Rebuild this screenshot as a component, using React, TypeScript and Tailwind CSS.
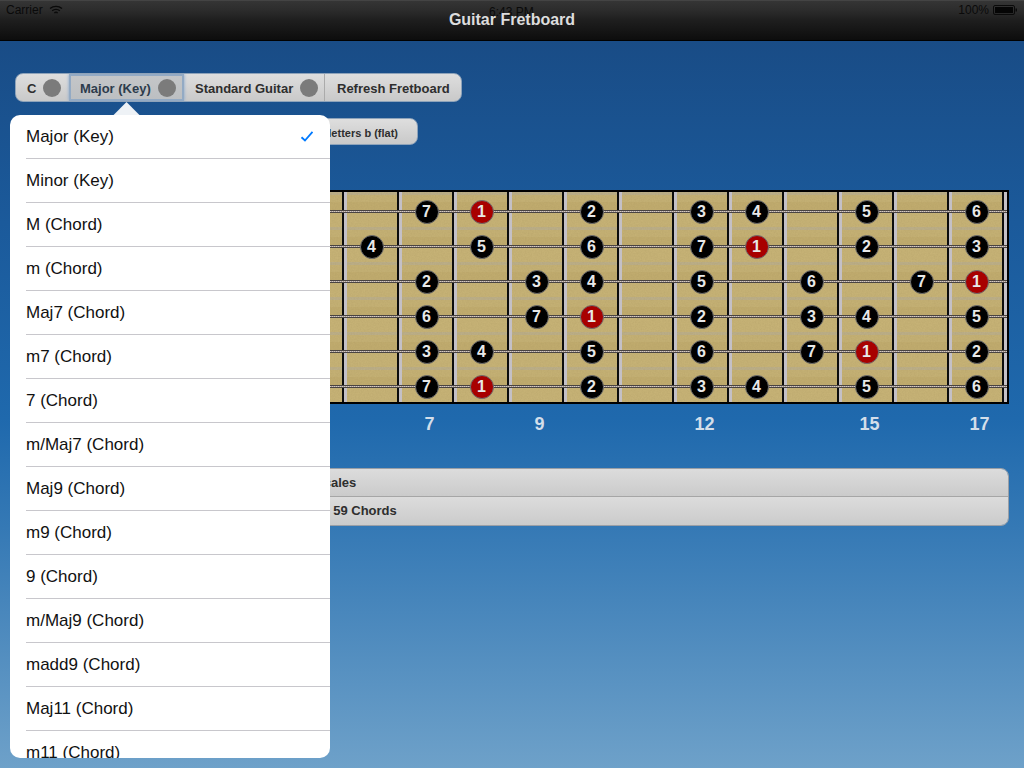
import React from 'react';

const KEY_OPTIONS = [
  'Major (Key)',
  'Minor (Key)',
  'M (Chord)',
  'm (Chord)',
  'Maj7 (Chord)',
  'm7 (Chord)',
  '7 (Chord)',
  'm/Maj7 (Chord)',
  'Maj9 (Chord)',
  'm9 (Chord)',
  '9 (Chord)',
  'm/Maj9 (Chord)',
  'madd9 (Chord)',
  'Maj11 (Chord)',
  'm11 (Chord)',
];

// fret -> scale degree, one map per string. Frets under the popover are left out.
const STRINGS: Record<number, number>[] = [
  { 7: 7, 8: 1, 10: 2, 12: 3, 13: 4, 15: 5, 17: 6 },
  { 6: 4, 8: 5, 10: 6, 12: 7, 13: 1, 15: 2, 17: 3 },
  { 7: 2, 9: 3, 10: 4, 12: 5, 14: 6, 16: 7, 17: 1 },
  { 7: 6, 9: 7, 10: 1, 12: 2, 14: 3, 15: 4, 17: 5 },
  { 7: 3, 8: 4, 10: 5, 12: 6, 14: 7, 15: 1, 17: 2 },
  { 7: 7, 8: 1, 10: 2, 12: 3, 13: 4, 15: 5, 17: 6 },
];

const FRETS = Array.from({ length: 18 }, (_, i) => i);
const FRET_MARKERS = [7, 9, 12, 15, 17];

function StatusBar() {
  return (
    <div className="absolute inset-x-0 top-0 flex h-5 items-center justify-between pl-[6px] pr-[6px] text-[12px] text-[#0a0a0a]">
      <div className="flex items-center gap-[6px]">
        <span>Carrier</span>
        <svg width="14" height="10" viewBox="0 0 14 10" fill="none" stroke="#0a0a0a" strokeWidth="1.3">
          <path d="M1 3.6C4.4 .6 9.6 .6 13 3.6" />
          <path d="M3.2 5.8C5.3 4 8.7 4 10.8 5.8" />
          <path d="M5.3 7.9C6.3 7.1 7.7 7.1 8.7 7.9" />
        </svg>
      </div>
      <span className="absolute left-[489px] top-[3px]">6:43 PM</span>
      <div className="flex items-center gap-[4px]">
        <span>100%</span>
        <svg width="25" height="10" viewBox="0 0 25 10">
          <rect x="0.5" y="0.5" width="21" height="9" rx="1.5" fill="none" stroke="#0a0a0a" />
          <rect x="2" y="2" width="18" height="6" fill="#050505" />
          <rect x="22.5" y="3.5" width="1.5" height="3" fill="#0a0a0a" />
        </svg>
      </div>
    </div>
  );
}

function Segment({
  label,
  hasDot,
  selected,
  className,
}: {
  label: string;
  hasDot?: boolean;
  selected?: boolean;
  className: string;
}) {
  return (
    <div
      className={`flex h-full items-center gap-[7px] pt-[1px] ${className} ${
        selected
          ? 'border-2 border-[#93aac4] bg-[linear-gradient(180deg,#c4c6c8,#bcbfc2)] text-[#2d3c4c] shadow-[0_0_3px_#7ea2cc]'
          : 'text-[#2e2e2e]'
      }`}
    >
      <span className="pt-[1px]">{label}</span>
      {hasDot && <span className="h-[18px] w-[18px] rounded-full bg-[#7b7b7b]" />}
    </div>
  );
}

function Note({ degree }: { degree: number }) {
  return (
    <div
      className={`relative flex h-[24px] w-[24px] items-center justify-center rounded-full border border-[#6f6f6f] text-[16px] font-bold text-[#e8e8e8] ${
        degree === 1 ? 'bg-[#a80000]' : 'bg-black'
      }`}
    >
      {degree}
    </div>
  );
}

function Fretboard() {
  return (
    <div className="relative h-[214px] w-[994px] overflow-hidden border-2 border-black bg-[repeating-linear-gradient(180deg,#bbae88_0_3px,#c4b074_3px_10px,#c0ab6e_10px_19px,#c6b276_19px_35px)]">
      {/* wood grain */}
      <svg className="absolute inset-0 h-full w-full opacity-25">
        <filter id="grain">
          <feTurbulence type="fractalNoise" baseFrequency="0.7 0.7" numOctaves="2" seed="4" />
          <feColorMatrix values="0 0 0 0 0.35  0 0 0 0 0.27  0 0 0 0 0.1  0 0 0 1.2 -0.3" />
        </filter>
        <rect width="100%" height="100%" filter="url(#grain)" />
      </svg>
      {/* frets */}
      <div className="absolute inset-0 bg-[repeating-linear-gradient(90deg,transparent_0_50px,#0c0c0c_50px_51.5px,#c4c0c6_51.5px_54.5px,transparent_54.5px_55px)]" />
      <div className="relative flex flex-col pt-[2px]">
        {STRINGS.map((notes, s) => (
          <div key={s} className="relative h-[35px]">
            <div className="absolute inset-x-0 top-[16px] h-[3px] border-y border-[#4a4442] bg-[repeating-linear-gradient(90deg,#a3958f_0_1px,#d4cbc6_1px_2px)]" />
            <div className="relative grid h-full grid-cols-[52px_repeat(17,55px)]">
              {FRETS.map((fret) => (
                <div key={fret} className="flex items-center justify-center">
                  {notes[fret] !== undefined && <Note degree={notes[fret]} />}
                </div>
              ))}
            </div>
          </div>
        ))}
      </div>
    </div>
  );
}

function KeyPopover() {
  return (
    <div className="absolute left-[10px] top-[115px] h-[643px] w-[320px]">
      <div className="absolute left-[107px] top-[-9px] h-[19px] w-[19px] rotate-45 bg-[#eef2f6]" />
      <div className="relative h-full overflow-hidden rounded-[10px] bg-white">
        {KEY_OPTIONS.map((option, i) => (
          <div key={option} className="h-[44px] pl-[16px]">
            <div className="flex h-full items-center justify-between border-b border-[#c8c7cc] pr-[16px] text-[17px] text-[#111111]">
              <span>{option}</span>
              {i === 0 && (
                <svg width="14" height="11" viewBox="0 0 14 12" fill="none" stroke="#007aff" strokeWidth="2">
                  <path d="M1 6.8L4.8 10.4L13 1" />
                </svg>
              )}
            </div>
          </div>
        ))}
      </div>
    </div>
  );
}

export default function App() {
  return (
    <div className="relative flex h-[768px] w-[1024px] flex-col overflow-hidden [font-family:'Liberation_Sans',Arial,sans-serif]">
      <header className="relative flex h-[41px] shrink-0 items-center justify-center bg-[linear-gradient(180deg,#363636,#2c2c2c_25%,#1e1e1e_50%,#0c0c0c)] pb-[2px] shadow-[inset_0_1px_0_#444,inset_0_-1px_0_#000]">
        <StatusBar />
        <h1 className="relative text-[16px] font-bold text-[#dddddd]">Guitar Fretboard</h1>
      </header>

      <main className="flex flex-1 flex-col items-start bg-[linear-gradient(180deg,#194c86,#1b5a9b_25%,#1f69ad_52%,#3579b5_67%,#6ea1c9)] pl-[15px] pt-[32px]">
        <div className="flex h-[29px] w-[447px] overflow-hidden rounded-[8px] border border-[#8ea3ba] bg-[linear-gradient(180deg,#dedede,#c9c9c9)] text-[13px] font-bold">
          <Segment label="C" hasDot className="w-[53px] pl-[11px]" />
          <Segment label="Major (Key)" hasDot selected className="w-[115px] pl-[9px]" />
          <Segment label="Standard Guitar" hasDot className="w-[141px] border-r border-[#ababab] pl-[11px]" />
          <Segment label="Refresh Fretboard" className="w-[136px] pl-[12px]" />
        </div>

        <div className="mt-[16px] flex h-[27px] w-[403px] items-center justify-end rounded-[8px] border border-[#8ea3ba] bg-[linear-gradient(180deg,#dedede,#c9c9c9)] pr-[19px] pt-[3px] text-[11px] font-bold text-[#2e2e2e]">
          Note letters b (flat)
        </div>

        <div className="mt-[45px]">
          <Fretboard />
        </div>

        <div className="grid h-[40px] grid-cols-[55px_repeat(17,55px)] items-center pl-[2px] text-[18px] font-bold text-[#d3deea]">
          {FRETS.map((fret) => (
            <div key={fret} className="text-center">
              {FRET_MARKERS.includes(fret) ? fret : ''}
            </div>
          ))}
        </div>

        <div className="mt-[24px] w-[994px] overflow-hidden rounded-[8px] border border-[#9a9fa6] text-[13px] font-bold text-[#2e2e2e]">
          <div className="flex h-[28px] items-center border-b border-[#a6a6a6] bg-[linear-gradient(180deg,#dcdcdc,#cbcbcb)] pl-[299px] pt-[1px]">
            Scales
          </div>
          <div className="flex h-[28px] items-center bg-[linear-gradient(180deg,#dcdcdc,#cbcbcb)] pl-[297px]">
            All 59 Chords
          </div>
        </div>
      </main>

      <KeyPopover />
    </div>
  );
}
